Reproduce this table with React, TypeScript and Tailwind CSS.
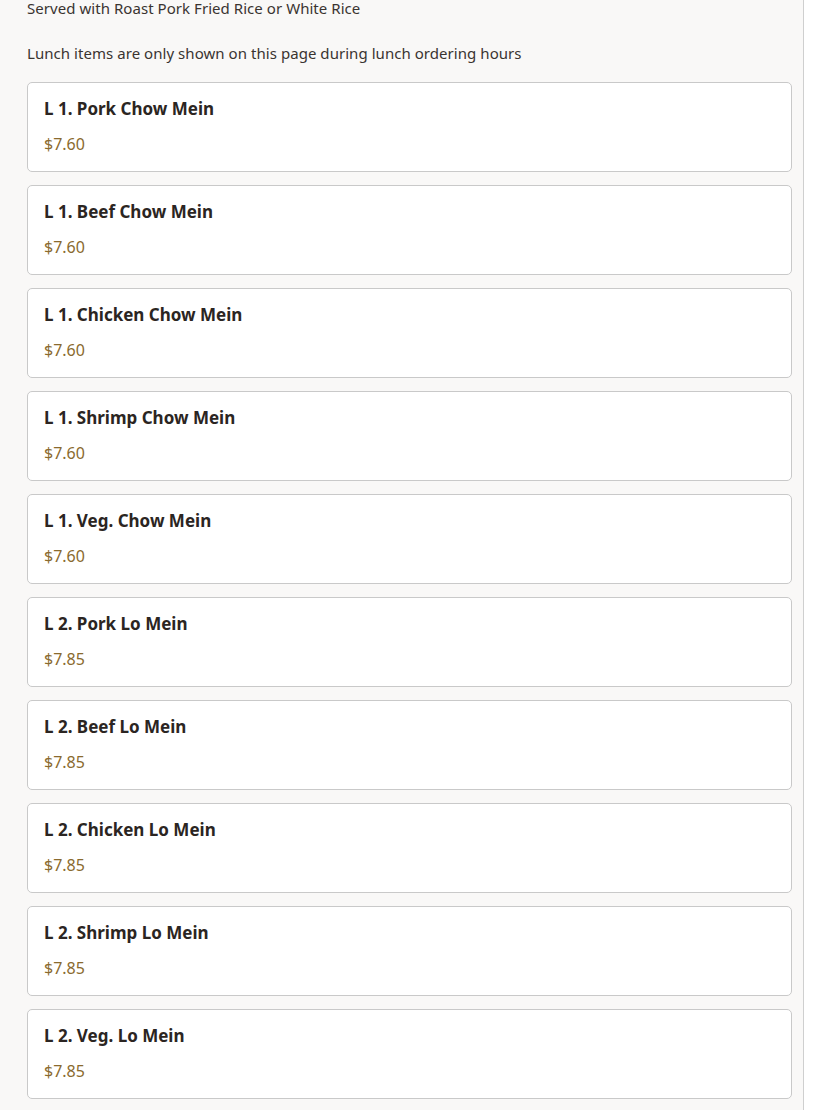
const items: [string, string][] = [
    ["L 1. Pork Chow Mein", "$7.60"],
    ["L 1. Beef Chow Mein", "$7.60"],
    ["L 1. Chicken Chow Mein", "$7.60"],
    ["L 1. Shrimp Chow Mein", "$7.60"],
    ["L 1. Veg. Chow Mein", "$7.60"],
    ["L 2. Pork Lo Mein", "$7.85"],
    ["L 2. Beef Lo Mein", "$7.85"],
    ["L 2. Chicken Lo Mein", "$7.85"],
    ["L 2. Shrimp Lo Mein", "$7.85"],
    ["L 2. Veg. Lo Mein", "$7.85"],
];

function MenuCard({ name, price }: { name: string; price: string }) {
    return (
        <div className="rounded-[5px] border border-[#c9c9c9] bg-white px-4 pt-[14px] pb-[17px]">
            <h3 className="text-[17px] leading-[24px] font-bold text-[#2b2522]">{name}</h3>
            <p className="mt-[13px] text-[16px] leading-[20px] text-[#8a6a2e]">{price}</p>
        </div>
    );
}

export default function App() {
    return (
        <div className="w-[824px] h-[1112px] overflow-hidden bg-white" style={{ fontFamily: '"Noto Sans", sans-serif' }}>
            <section className="w-[804px] h-full border-r border-[#cfcfcf] bg-[#f9f8f7] pl-[27px] pr-[11px]">
                <p className="-mt-[2px] text-[15px] leading-[20px] tracking-[0.05px] text-[#3a3431]">
                    Served with Roast Pork Fried Rice or White Rice
                </p>
                <p className="mt-[25px] text-[15px] leading-[20px] tracking-[0.05px] text-[#3a3431]">
                    Lunch items are only shown on this page during lunch ordering hours
                </p>

                <div className="mt-[19px] flex flex-col gap-[13px]">
                    {items.map(([name, price]) => (
                        <MenuCard key={name} name={name} price={price} />
                    ))}
                </div>
            </section>
        </div>
    );
}
